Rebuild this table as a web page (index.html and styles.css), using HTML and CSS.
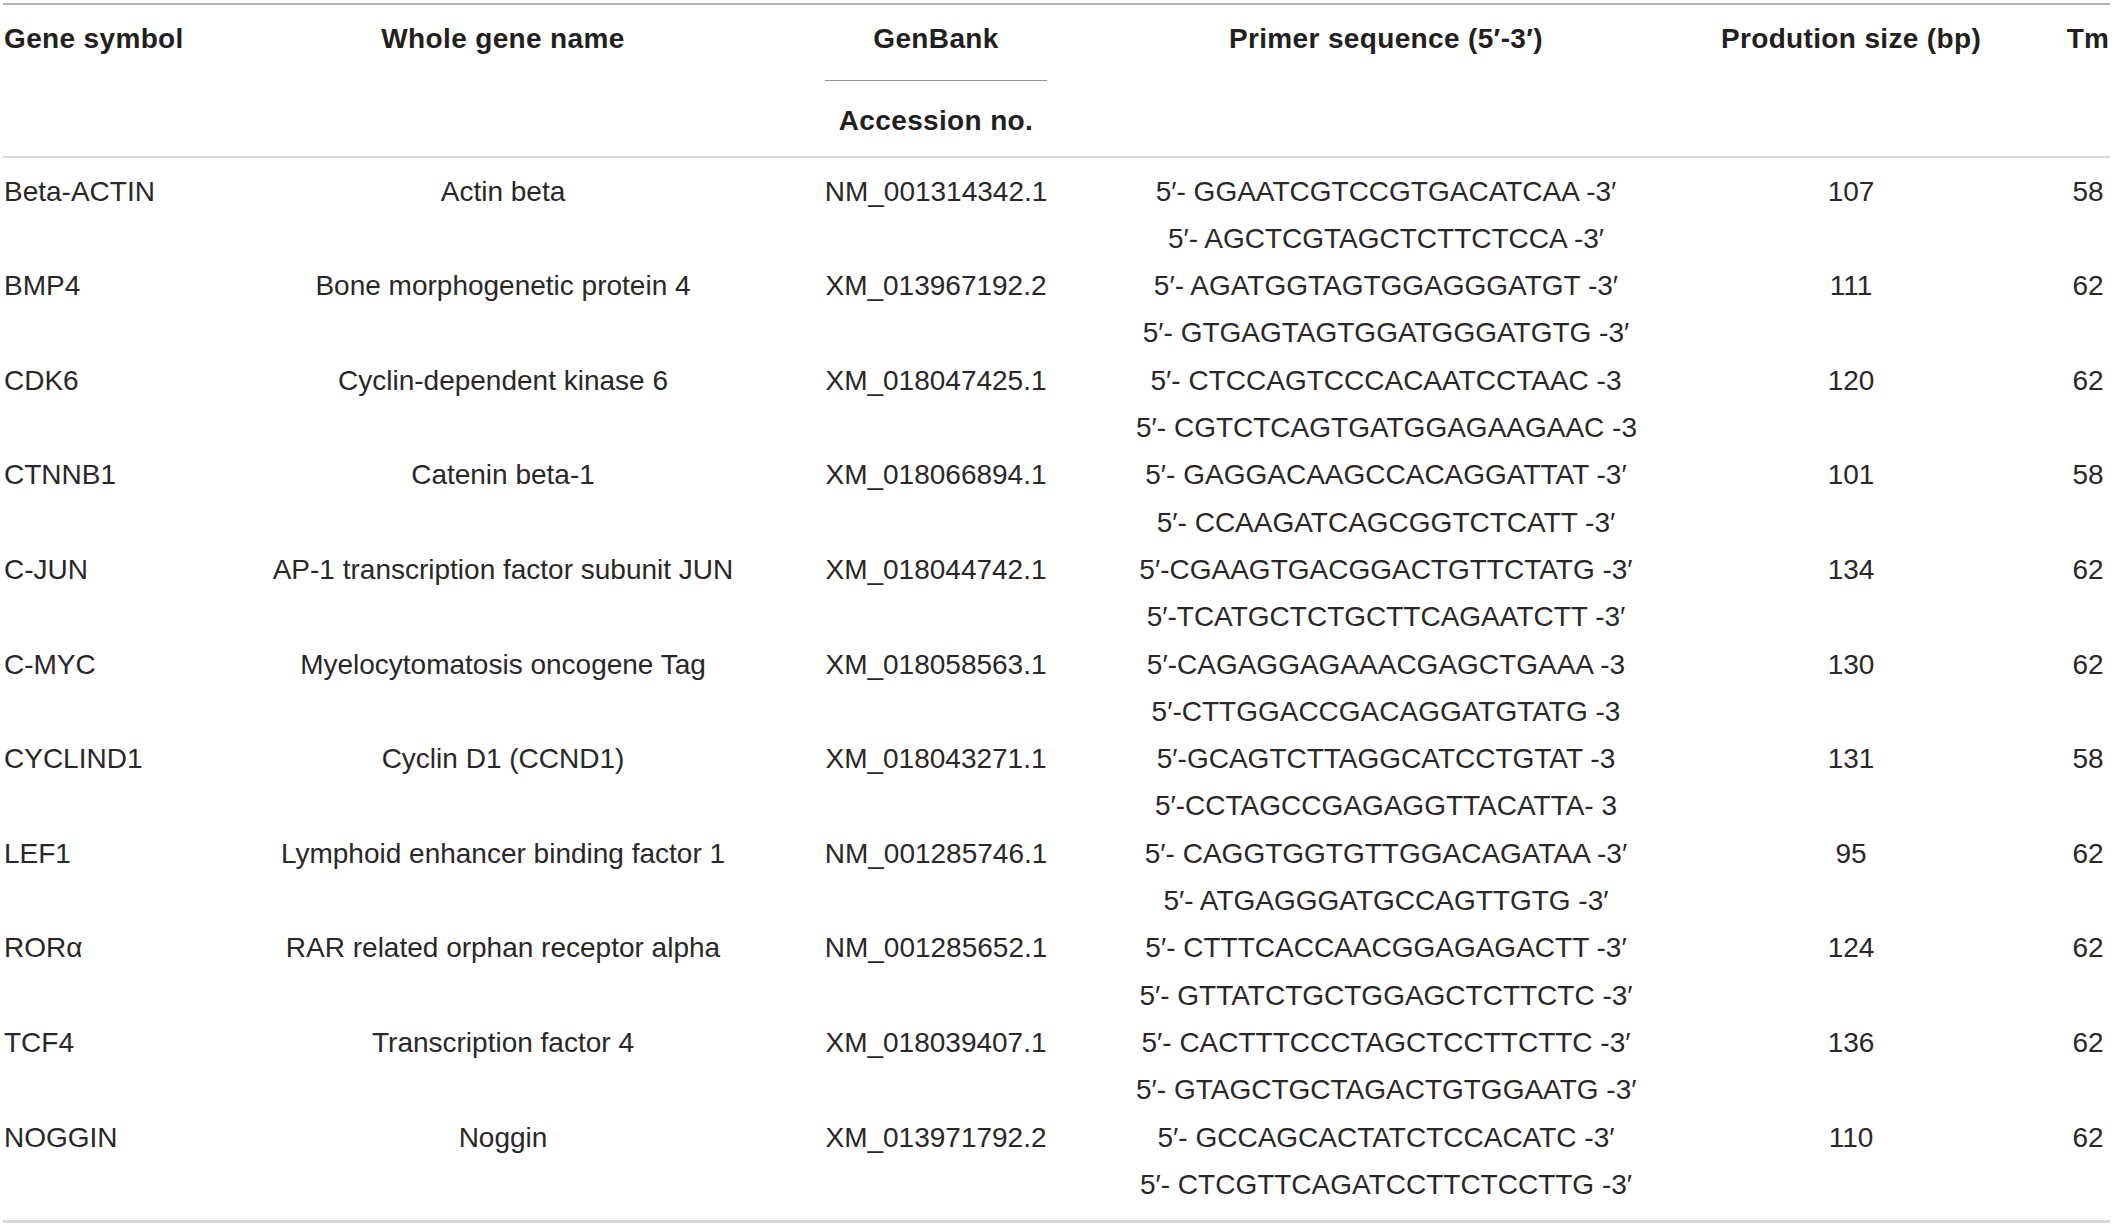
FILE: index.html
```html
<!DOCTYPE html>
<html lang="en">
<head>
<meta charset="utf-8">
<title>Primer table</title>
<link rel="stylesheet" href="styles.css">
</head>
<body>
<table class="primers">
  <colgroup>
    <col class="w-sym">
    <col class="w-name">
    <col class="w-acc">
    <col class="w-primer">
    <col class="w-size">
    <col class="w-tm">
  </colgroup>
  <thead>
    <tr>
      <th class="left">Gene symbol</th>
      <th>Whole gene name</th>
      <th><div class="genbank">GenBank</div><div class="accession">Accession no.</div></th>
      <th>Primer sequence (5′-3′)</th>
      <th>Prodution size (bp)</th>
      <th>Tm</th>
    </tr>
  </thead>
  <tbody>
    <tr>
      <td class="left">Beta-ACTIN</td><td>Actin beta</td><td>NM_001314342.1</td>
      <td><div>5′- GGAATCGTCCGTGACATCAA -3′</div><div>5′- AGCTCGTAGCTCTTCTCCA -3′</div></td>
      <td>107</td><td>58</td>
    </tr>
    <tr>
      <td class="left">BMP4</td><td>Bone morphogenetic protein 4</td><td>XM_013967192.2</td>
      <td><div>5′- AGATGGTAGTGGAGGGATGT -3′</div><div>5′- GTGAGTAGTGGATGGGATGTG -3′</div></td>
      <td>111</td><td>62</td>
    </tr>
    <tr>
      <td class="left">CDK6</td><td>Cyclin-dependent kinase 6</td><td>XM_018047425.1</td>
      <td><div>5′- CTCCAGTCCCACAATCCTAAC -3</div><div>5′- CGTCTCAGTGATGGAGAAGAAC -3</div></td>
      <td>120</td><td>62</td>
    </tr>
    <tr>
      <td class="left">CTNNB1</td><td>Catenin beta-1</td><td>XM_018066894.1</td>
      <td><div>5′- GAGGACAAGCCACAGGATTAT -3′</div><div>5′- CCAAGATCAGCGGTCTCATT -3′</div></td>
      <td>101</td><td>58</td>
    </tr>
    <tr>
      <td class="left">C-JUN</td><td>AP-1 transcription factor subunit JUN</td><td>XM_018044742.1</td>
      <td><div>5′-CGAAGTGACGGACTGTTCTATG -3′</div><div>5′-TCATGCTCTGCTTCAGAATCTT -3′</div></td>
      <td>134</td><td>62</td>
    </tr>
    <tr>
      <td class="left">C-MYC</td><td>Myelocytomatosis oncogene Tag</td><td>XM_018058563.1</td>
      <td><div>5′-CAGAGGAGAAACGAGCTGAAA -3</div><div>5′-CTTGGACCGACAGGATGTATG -3</div></td>
      <td>130</td><td>62</td>
    </tr>
    <tr>
      <td class="left">CYCLIND1</td><td>Cyclin D1 (CCND1)</td><td>XM_018043271.1</td>
      <td><div>5′-GCAGTCTTAGGCATCCTGTAT -3</div><div>5′-CCTAGCCGAGAGGTTACATTA- 3</div></td>
      <td>131</td><td>58</td>
    </tr>
    <tr>
      <td class="left">LEF1</td><td>Lymphoid enhancer binding factor 1</td><td>NM_001285746.1</td>
      <td><div>5′- CAGGTGGTGTTGGACAGATAA -3′</div><div>5′- ATGAGGGATGCCAGTTGTG -3′</div></td>
      <td>95</td><td>62</td>
    </tr>
    <tr>
      <td class="left">RORα</td><td>RAR related orphan receptor alpha</td><td>NM_001285652.1</td>
      <td><div>5′- CTTTCACCAACGGAGAGACTT -3′</div><div>5′- GTTATCTGCTGGAGCTCTTCTC -3′</div></td>
      <td>124</td><td>62</td>
    </tr>
    <tr>
      <td class="left">TCF4</td><td>Transcription factor 4</td><td>XM_018039407.1</td>
      <td><div>5′- CACTTTCCCTAGCTCCTTCTTC -3′</div><div>5′- GTAGCTGCTAGACTGTGGAATG -3′</div></td>
      <td>136</td><td>62</td>
    </tr>
    <tr>
      <td class="left">NOGGIN</td><td>Noggin</td><td>XM_013971792.2</td>
      <td><div>5′- GCCAGCACTATCTCCACATC -3′</div><div>5′- CTCGTTCAGATCCTTCTCCTTG -3′</div></td>
      <td>110</td><td>62</td>
    </tr>
  </tbody>
</table>
</body>
</html>
```

FILE: styles.css
```css
html, body {
  margin: 0;
  padding: 0;
  background: #ffffff;
}

.primers {
  margin: 3px 3px 0 3px;
  width: 2107px;
  table-layout: fixed;
  border-collapse: collapse;
  font-family: "Liberation Sans", Arial, sans-serif;
  font-size: 28px;
  line-height: 47.3px;
  color: #231f20;
}

.w-sym { width: 267px; }
.w-name { width: 466px; }
.w-acc { width: 400px; }
.w-primer { width: 500px; }
.w-size { width: 430px; }
.w-tm { width: 44px; }

.primers th,
.primers td {
  padding: 0;
  text-align: center;
  vertical-align: top;
  white-space: nowrap;
}

.primers td {
  color: #2a2728;
}

.primers .left {
  text-align: left;
  padding-left: 1px;
}

.primers th {
  font-weight: 700;
  letter-spacing: 0.35px;
  border-top: 2px solid #b4b4b4;
  border-bottom: 2px solid #d9d9d9;
  padding-top: 9.5px;
  padding-bottom: 11.5px;
}

.genbank {
  width: 222px;
  margin: 0 auto;
  padding-bottom: 18px;
  border-bottom: 1px solid #8f8f8f;
}

.accession {
  margin-top: 16px;
}

.primers tbody tr:first-child td {
  padding-top: 10px;
}

.primers tbody tr:last-child td {
  padding-bottom: 11.5px;
  border-bottom: 3px solid #d9d9d9;
}
```
